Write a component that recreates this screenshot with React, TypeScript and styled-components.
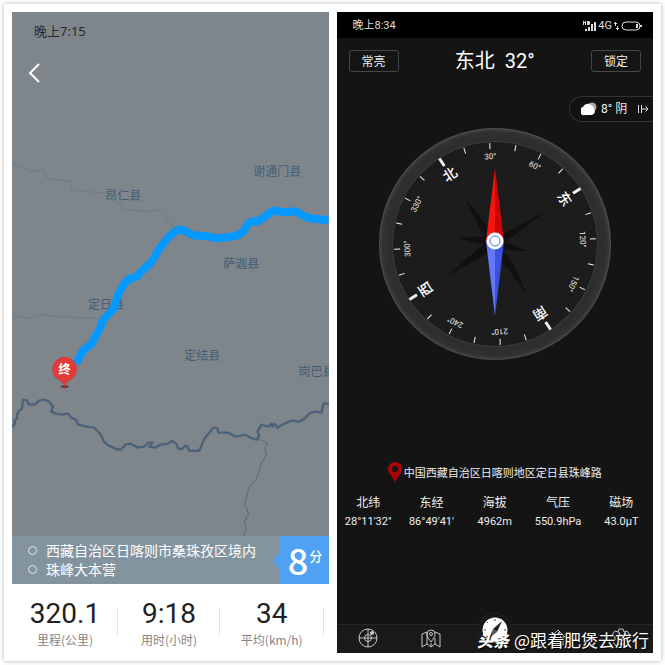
import React from "react";
import styled, { createGlobalStyle } from "styled-components";

const Global = createGlobalStyle`
  * { box-sizing: border-box; }
  html, body, #root { margin: 0; padding: 0; }
  body { background: #fdfdfd; font-family: "Noto Sans CJK SC", sans-serif; }
  button { font-family: inherit; }
`;

const Page = styled.main`
  min-height: 100vh;
  padding: 4px;
  display: flex;
`;
const Card = styled.div`
  flex: 1;
  display: grid;
  grid-template-columns: 1fr 1fr;
  gap: 8px;
  padding: 8px;
  background: #fff;
  box-shadow: 0 0 4px rgba(0, 0, 0, 0.3);
`;
const Phone = styled.section<{ $dark?: boolean }>`
  position: relative;
  min-width: 0;
  display: flex;
  flex-direction: column;
  overflow: hidden;
  background: ${(p) => (p.$dark ? "#141414" : "#fff")};
  color: ${(p) => (p.$dark ? "#eee" : "#222")};
`;

/* Trip map */
const MapArea = styled.div`
  position: relative;
  flex: 1;
  background: #7e868c;
`;
const MapSvg = styled.svg`
  position: absolute;
  inset: 0;
  width: 100%;
  height: 100%;
  display: block;
`;
const MapTop = styled.div`
  position: relative;
  display: flex;
  flex-direction: column;
  align-items: flex-start;
  gap: 20px;
  padding: 9px 15px;
`;
const Clock = styled.time`
  padding-left: 7px;
  font: 13px/20px "Noto Sans", "Noto Sans CJK SC", sans-serif;
  color: #24292d;
`;
const Back = styled.button`
  display: flex;
  padding: 0;
  border: 0;
  background: none;
  color: #fff;
`;
const Banner = styled.div`
  display: flex;
  height: 48px;
  background: #84949f;
  color: #fff;
`;
const Stops = styled.ul`
  flex: 1;
  margin: 0;
  padding: 5px 0 5px 16px;
  list-style: none;
  font-size: 14px;
  line-height: 19px;
  white-space: nowrap;
`;
const Stop = styled.li`
  display: flex;
  align-items: center;
  gap: 9px;
  &::before {
    content: "";
    width: 7px;
    height: 7px;
    border: 1px solid #e4e9ec;
    border-radius: 50%;
  }
`;
const Score = styled.div`
  position: relative;
  display: flex;
  justify-content: center;
  gap: 1px;
  width: 50px;
  padding-left: 3px;
  background: #50a1f1;
  font: 500 36px/46px "Noto Sans CJK SC", sans-serif;
  &::before {
    content: "";
    position: absolute;
    right: 100%;
    top: 17px;
    border: solid transparent;
    border-width: 8px 6px 8px 0;
    border-right-color: #50a1f1;
  }
`;
const Unit = styled.small`
  font-size: 13px;
  line-height: 40px;
`;
const Stats = styled.dl`
  display: grid;
  grid-template-columns: 106px 102px 1fr;
  height: 69px;
  margin: 0;
  padding: 12px 5px 0 0;
`;
const Stat = styled.div`
  display: flex;
  flex-direction: column-reverse;
  justify-content: flex-end;
  height: 53px;
  text-align: center;
  white-space: nowrap;
  background: linear-gradient(#e4e4e4, #e4e4e4) right 12px / 1px 28px no-repeat;
`;
const StatValue = styled.dd`
  margin: 0;
  font: 28px/35px Roboto, sans-serif;
  color: #222;
`;
const StatName = styled.dt`
  font-size: 12px;
  line-height: 18px;
  color: #858585;
`;

/* Compass */
const StatusBar = styled.header`
  display: flex;
  align-items: center;
  justify-content: space-between;
  height: 26px;
  padding: 2px 11px 0 16px;
  background: #000;
  font: 11px/16px Roboto, "Noto Sans CJK SC", sans-serif;
  color: #ddd;
`;
const Signals = styled.span`
  display: flex;
  align-items: center;
  gap: 2px;
`;
const TitleBar = styled.div`
  display: flex;
  align-items: center;
  justify-content: space-between;
  height: 46px;
  padding: 0 12px;
`;
const Heading = styled.h1`
  margin: 0;
  font: 20px/28px Roboto, "Noto Sans CJK SC", sans-serif;
  color: #fff;
  white-space: pre;
`;
const Toggle = styled.button`
  width: 50px;
  height: 22px;
  padding: 0;
  border: 1px solid #464646;
  border-radius: 3px;
  background: #151515;
  color: #eee;
  font-size: 12px;
  line-height: 18px;
`;
const Weather = styled.button`
  align-self: flex-end;
  display: flex;
  align-items: center;
  width: 84px;
  height: 26px;
  margin-top: 12px;
  padding: 0 4px 0 11px;
  border: 1px solid #333;
  border-right: 0;
  border-radius: 13px 0 0 13px;
  background: #121212;
  color: #eee;
  font: 12px/18px Roboto, "Noto Sans CJK SC", sans-serif;
  white-space: nowrap;
`;
const WeatherText = styled.span`
  flex: 1;
  padding-left: 4px;
  text-align: left;
`;
const Dial = styled.svg`
  align-self: center;
  width: 234px;
  height: 234px;
  margin-top: 5px;
`;
const Place = styled.p`
  display: flex;
  align-items: center;
  justify-content: center;
  gap: 2px;
  margin: 99px 0 0;
  font-size: 11px;
  line-height: 24px;
  white-space: nowrap;
`;
const Readings = styled.dl`
  display: grid;
  grid-template-columns: repeat(5, 1fr);
  margin: 7px 0 0;
  text-align: center;
`;
const ReadingName = styled.dt`
  font-size: 12px;
  line-height: 22px;
`;
const ReadingValue = styled.dd`
  margin: 0;
  font: 11px/18px Roboto, sans-serif;
`;
const Tabs = styled.nav`
  position: relative;
  display: grid;
  grid-template-columns: repeat(5, 1fr);
  height: 29px;
  margin-top: auto;
  border-top: 1px solid #262626;
  background: #191919;
`;
const Tab = styled.button<{ $main?: boolean }>`
  display: flex;
  justify-content: center;
  align-items: flex-start;
  height: 28px;
  padding: 0;
  margin-top: ${(p) => (p.$main ? "-14px" : "3px")};
  border: 0;
  background: none;
  color: #c8c8c8;
`;
const Watermark = styled.div`
  position: absolute;
  right: 4px;
  bottom: 1px;
  display: flex;
  align-items: center;
  gap: 5px;
  font-size: 17px;
  line-height: 24px;
  color: #fff;
  text-shadow: 1px 1px 1px #000;
  white-space: nowrap;
`;
const Brand = styled.b`
  font-size: 16px;
  font-weight: 900;
  font-style: italic;
`;

const places = [
  { name: "谢通门县", x: 253, y: 176 },
  { name: "昂仁县", x: 105, y: 200 },
  { name: "萨迦县", x: 223, y: 268 },
  { name: "定日县", x: 88, y: 309 },
  { name: "定结县", x: 184, y: 359 },
  { name: "岗巴县", x: 298, y: 375 },
];

const TripMap = () => (
  <MapSvg viewBox="12 12 316 524" preserveAspectRatio="xMinYMin slice" role="img" aria-label="路线地图">
    <g fill="none" strokeLinejoin="round" strokeLinecap="round">
      <g stroke="#727b82" strokeWidth="1">
        <path d="M12 162L18 166 24 167 28 171 43 170 46 176 50 179 62 180 71 181 72 191 80 190 93 192 105 192M115 200L120 205 126 209 132 210 145 211 158 210 163 214 167 221 175 227" />
        <path d="M12 315L22 317 32 318 42 314 58 316 75 317 88 317 97 318 104 314" />
      </g>
      <path stroke="#5d6b73" strokeWidth="1" d="M257 438L262 440 267 443 264 447 266 453 263 460 261 461 260 467 258 473 255 480 250 485 247 492 246 498 244 503 247 509 248 514 244 521 246 528 243 536" />
      <path stroke="#4d6278" strokeWidth="2.4" d="M12 426L15 423 14 420 17 418 17 414 19 410 22 408 23 399 27 400 29 404 35 404 39 400 44 399 49 401 53 406 51 411 56 413 62 414 68 413 71 417 76 419 78 424 86 426 94 427 100 433 104 441 107 444 115 448 121 449 125 444 130 443 138 447 144 446 148 442 152 442 149 446 155 447 160 444 168 443 172 440 176 443 178 448 182 448 185 445 187 446 189 450 199 450 204 438 208 433 213 427 217 428 218 432 228 432 235 436 245 434 250 437 256 439 259 435 257 431 261 424 268 426 271 423 272 426 274 423 277 427 284 423 291 420 299 421 305 417 310 412 315 411 321 412 323 403 328 403" />
    </g>
    <g fill="#455d73" fontSize="12">
      {places.map((p) => <text key={p.name} x={p.x} y={p.y}>{p.name}</text>)}
    </g>
    <path fill="none" stroke="#0599ff" strokeWidth="8" strokeLinejoin="round" d="M76 363L80 355 84 349 92 343 95 336 100 328 102 321 107 315 113 309 117 297 121 288 125 282 130 278 137 276 142 270 150 263 154 257 158 250 163 243 170 235 175 231 180 229 185 231 193 235 207 236 217 238 227 237 237 235 243 231 248 223 252 221 258 221 265 216 273 210 283 212 295 211 302 215 309 218 328 220" />
    <ellipse cx="64.500" cy="386" rx="4" ry="1.500" fill="#6e3d41" />
    <path fill="#e43b3a" stroke="#c63634" strokeWidth=".6" d="M64.500 386C63 381 60 380 57 378A12 12 0 1 1 72 378C69 380 66 381 64.500 386Z" />
    <text x="64.500" y="373" textAnchor="middle" fill="#fff" fontSize="12" fontWeight="700">终</text>
  </MapSvg>
);

const degrees = Array.from({ length: 24 }, (_, i) => i * 15);
const cardinal: Record<number, string> = { 0: "北", 90: "东", 180: "南", 270: "西" };

const Compass = () => (
  <Dial viewBox="-117 -117 234 234" role="img" aria-label="东北 32°">
    <defs>
      <linearGradient id="rim" x2="0" y2="1">
        <stop stopColor="#505050" /><stop offset="1" stopColor="#484848" />
      </linearGradient>
      <radialGradient id="band">
        <stop offset=".9" stopColor="#2d2d2d" /><stop offset=".97" stopColor="#303030" /><stop offset="1" stopColor="#3e3e3e" />
      </radialGradient>
    </defs>
    <circle r="116" fill="url(#rim)" />
    <circle r="115" fill="url(#band)" />
    <circle r="103" fill="#3c3c3c" />
    <circle r="102" fill="#1c1c1c" />
    <g fill="#101010" transform="translate(0 -3)">
      <path d="M-30-43L-13-8-5 0 0-5ZM51-30L18-12 3-5 5 5ZM31 52L18 22 5 6-4 6ZM-48 35L-17 8-5-1 0 8Z" />
      <path d="M-37-3L-9-5 0 0-10 4ZM33 10L12 2 0 0 10 9Z" />
    </g>
    <g transform="rotate(-33)">
      {degrees.map((d) => {
        const name = cardinal[d];
        return (
          <g key={d} transform={`rotate(${d})`}>
            <path d={name ? "M0-102V-93" : "M0-101V-95"} stroke="#f1f1f1" strokeWidth={name ? 3 : 1} />
            {name && <text y="-78" fontSize="14" fontWeight="500" textAnchor="middle" fill="#fff">{name}</text>}
            {!name && d % 30 === 0 && (
              <text y="-85" fontSize="8" textAnchor="middle" fill="#eee" fontFamily="Roboto">{d}°</text>
            )}
          </g>
        );
      })}
    </g>
    <path d="M0-76L-9-3H0Z" fill="#f51410" /><path d="M0-76L9-3H0Z" fill="#c90605" />
    <path d="M0 72L-9-3H0Z" fill="#6478ff" /><path d="M0 72L9-3H0Z" fill="#3b52dc" />
    <circle cy="-3" r="8.500" fill="#fff" />
    <circle cy="-3" r="5" fill="#fff" stroke="#5d6ed0" strokeWidth="1" />
  </Dial>
);

const tabs = [
  { name: "卫星", art: <><circle cx="10" cy="10" r="9" /><circle cx="10" cy="10" r="3.500" /><path d="M10 1V19M1 10H19" /><circle cx="14" cy="5" r="1.500" fill="currentColor" /></> },
  { name: "地图", art: <><path d="M6 4L1 6V19L6 16 10 19 14 16 19 19V6L14 4M6 4V16M14 10V16M10 15V19" /><path d="M10 14C7 10 6 8 6 6A4 4 0 0 1 14 6C14 8 13 10 10 14Z" /><circle cx="10" cy="6" r="1.500" /></> },
  { name: "指南针", main: true },
  { name: "指北", art: <><path d="M3 9L10 2 17 9M5 8V17H15V8" /><circle cx="10" cy="10" r="3" /></> },
  { name: "设置", art: <><path d="M8 1H12L13 4 16 3 19 7 16 9V12L18 14 15 18 12 16H8L5 18 2 14 4 12V9L1 7 4 3 7 4Z" /><circle cx="10" cy="10" r="3" /></> },
];

export default function App() {
  return (
    <>
      <Global />
      <Page>
        <Card>
          <Phone>
            <MapArea>
              <TripMap />
              <MapTop>
                <Clock>晚上7:15</Clock>
                <Back aria-label="返回">
                  <svg width="14" height="24" viewBox="0 0 14 24" fill="none" stroke="currentColor" strokeWidth="2"><path d="M12 3L3 12 12 21" /></svg>
                </Back>
              </MapTop>
            </MapArea>
            <Banner>
              <Stops><Stop>西藏自治区日喀则市桑珠孜区境内</Stop><Stop>珠峰大本营</Stop></Stops>
              <Score>8<Unit>分</Unit></Score>
            </Banner>
            <Stats>
              <Stat><StatName>里程(公里)</StatName><StatValue>320.1</StatValue></Stat>
              <Stat><StatName>用时(小时)</StatName><StatValue>9:18</StatValue></Stat>
              <Stat><StatName>平均(km/h)</StatName><StatValue>34</StatValue></Stat>
            </Stats>
          </Phone>

          <Phone $dark>
            <StatusBar>
              <time>晚上8:34</time>
              <Signals>
                <svg width="13" height="11" viewBox="0 0 13 11" fill="#ddd"><path d="M0 0H1V1H2V0H3V4H2V2H1V4H0ZM4 0H6L7 1V3L6 4H4ZM2 8H4V10H2ZM5 6H7V10H5ZM8 3H10V10H8ZM11 1H13V10H11Z" /></svg>
                <span>4G</span>
                <svg width="5" height="10" viewBox="0 0 5 10" stroke="#ddd" fill="none"><path d="M1.500 5V1M0 2.500H3M3.500 5V9M2 7.500H5" /></svg>
                <svg width="21" height="10" viewBox="0 0 21 10" fill="none" stroke="#ddd"><rect x="1" y="1" width="18" height="8" rx="4" /><path d="M16 3V7M20 4V6" strokeWidth="2" /></svg>
              </Signals>
            </StatusBar>
            <TitleBar>
              <Toggle>常亮</Toggle>
              <Heading>东北  32°</Heading>
              <Toggle>锁定</Toggle>
            </TitleBar>
            <Weather>
              <svg width="16" height="14" viewBox="0 0 16 14"><circle cx="11" cy="5" r="4.500" fill="#aaa" /><path fill="#fff" d="M4 13A4 4 0 0 1 2 5 5 5 0 0 1 10 3 4.500 4.500 0 0 1 13 7C15 10 13 13 10 13Z" /></svg>
              <WeatherText>8° 阴</WeatherText>
              <svg width="12" height="10" viewBox="0 0 12 10" fill="none" stroke="#ddd"><path d="M1.500 1V9M4.500 1V9M5 5H11M8.500 2.500L11 5 8.500 7.500" /></svg>
            </Weather>
            <Compass />
            <Place>
              <svg width="14" height="20" viewBox="0 0 14 20"><path fill="#a90506" fillRule="evenodd" d="M7 20C4 14 0 11 0 7A7 7 0 0 1 14 7C14 11 10 14 7 20ZM7 4A3 3 0 1 0 7 10 3 3 0 0 0 7 4Z" /></svg>
              中国西藏自治区日喀则地区定日县珠峰路
            </Place>
            <Readings>
              {[["北纬", "28°11'32\""], ["东经", "86°49'41'"], ["海拔", "4962m"], ["气压", "550.9hPa"], ["磁场", "43.0μT"]].map(([name, value]) => (
                <div key={name}><ReadingName>{name}</ReadingName><ReadingValue>{value}</ReadingValue></div>
              ))}
            </Readings>
            <Tabs>
              {tabs.map((t) => (
                <Tab key={t.name} $main={t.main} aria-label={t.name}>
                  {t.main ? (
                    <svg width="36" height="36" viewBox="0 0 36 36" overflow="visible">
                      <circle cx="18" cy="19" r="17" fill="#171717" stroke="#242424" />
                      <circle cx="18" cy="19" r="12.500" fill="#fff" />
                      <path d="M25 10L20 21 16 18Z" fill="#222" /><path d="M12 27L16 18 20 21Z" fill="#555" />
                      <path d="M18 8V10M7 19H9M27 19H29M10 11L11 12" stroke="#444" />
                    </svg>
                  ) : (
                    <svg width="20" height="20" viewBox="0 0 20 20" fill="none" stroke="currentColor">{t.art}</svg>
                  )}
                </Tab>
              ))}
            </Tabs>
            <Watermark><Brand>头条</Brand><span>@跟着肥煲去旅行</span></Watermark>
          </Phone>
        </Card>
      </Page>
    </>
  );
}
